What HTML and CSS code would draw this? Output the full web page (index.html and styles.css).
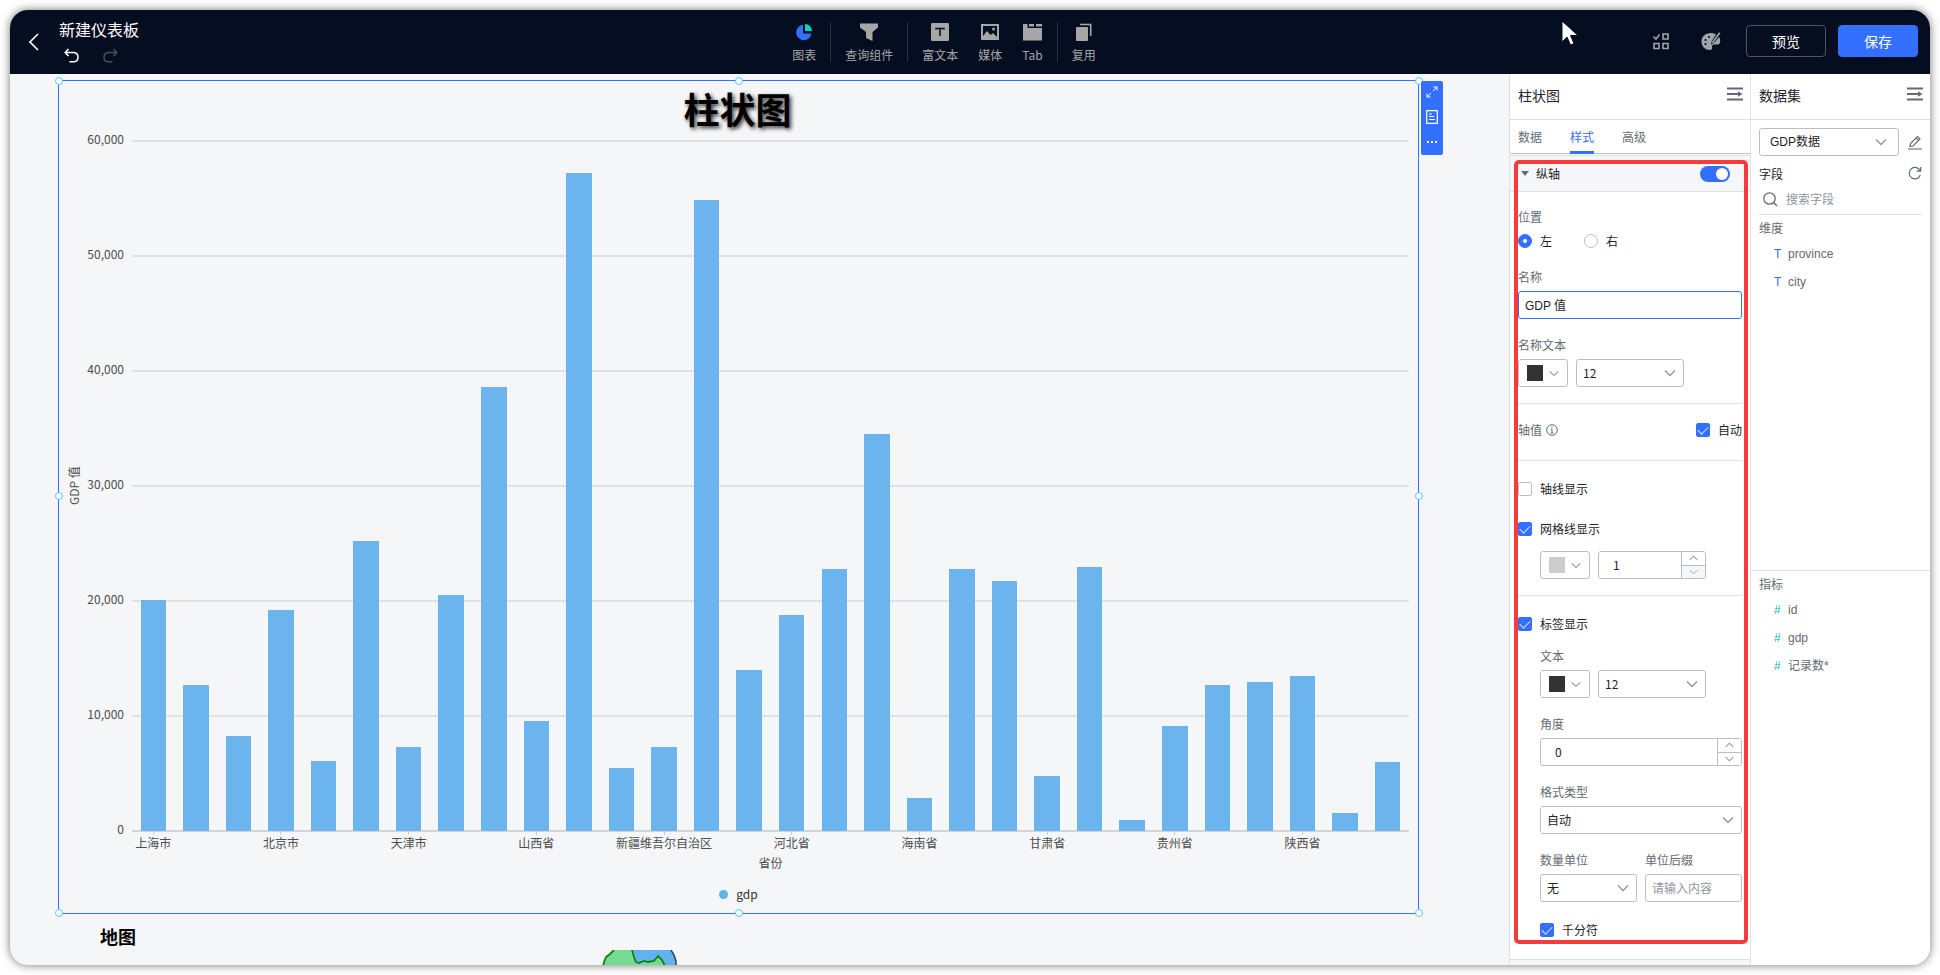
FILE: index.html
```html
<!DOCTYPE html>
<html lang="zh-CN">
<head>
<meta charset="utf-8">
<title>新建仪表板</title>
<link rel="stylesheet" href="styles.css">
</head>
<body>
<svg class="defs" aria-hidden="true">
  <symbol id="chev" viewBox="0 0 12 8"><path d="M1 1.5 6 6.5 11 1.5" fill="none" stroke="currentColor" stroke-width="1.3"/></symbol>
  <symbol id="fold" viewBox="0 0 16 14"><path d="M0 1.5h16M0 12.5h16" stroke="currentColor" stroke-width="2.2"/><path d="M0 7h12" stroke="currentColor" stroke-width="2"/><path d="M11 4.2 15.5 7 11 9.8z" fill="currentColor"/></symbol>
</svg>
<div class="app">
  <header class="topbar">
    <div class="brand">
      <button class="icon-btn back" aria-label="返回"><svg width="10" height="18" viewBox="0 0 10 18"><path d="M9 1 1 9l8 8" fill="none" stroke="#fff" stroke-width="1.6"/></svg></button>
      <div class="brand-text">
        <h1>新建仪表板</h1>
        <div class="history">
          <button class="icon-btn" aria-label="撤销"><svg width="16" height="16" viewBox="0 0 16 16"><path d="M4.5 1 1.2 4.5 4.5 8M1.5 4.5H10a4.7 4.7 0 0 1 0 9.3H5.5" fill="none" stroke="#fff" stroke-width="1.5"/></svg></button>
          <button class="icon-btn" aria-label="重做" disabled><svg width="16" height="16" viewBox="0 0 16 16"><path d="M11.5 1 14.8 4.5 11.5 8M14.5 4.5H6a4.7 4.7 0 0 0 0 9.3h4.5" fill="none" stroke="#4c5059" stroke-width="1.5"/></svg></button>
        </div>
      </div>
    </div>
    <nav class="tools">
      <div class="tool-group">
        <button class="tool"><svg width="18" height="18" viewBox="0 0 18 18"><path d="M8 1.8A7.7 7.7 0 1 0 16.5 10.500H8z" fill="#3370ff"/><path d="M10 1a7 7 0 0 1 7 7h-7z" fill="#00d6b9"/></svg>图表</button>
      </div>
      <div class="tool-group">
        <button class="tool"><svg width="18" height="18" viewBox="0 0 18 18"><path d="M0 .5h18v4L12.500 9v9L6 15V9L0 4.500z" fill="#a6a6a6"/></svg>查询组件</button>
      </div>
      <div class="tool-group">
        <button class="tool"><svg width="18" height="18" viewBox="0 0 18 18"><rect width="18" height="18" rx="1" fill="#a6a6a6"/><path d="M5 6.500V5.500h8v1M9 5.500V13" fill="none" stroke="#050e21" stroke-width="1.600"/></svg>富文本</button>
        <button class="tool"><svg width="18" height="18" viewBox="0 0 18 18"><path d="M0 1h18v16H0zM2 3v10l4-5 3.500 4L12 10l4 4V3z" fill="#a6a6a6" fill-rule="evenodd"/><circle cx="12.500" cy="6" r="1.500" fill="#a6a6a6"/></svg>媒体</button>
        <button class="tool"><svg width="19" height="18" viewBox="0 0 19 18"><path d="M0 1h4.500v4H19v12.500H0z" fill="#a6a6a6"/><path d="M6 1h5v2.500H6zM13 1h6v2.500h-6z" fill="#a6a6a6"/></svg>Tab</button>
      </div>
      <div class="tool-group">
        <button class="tool"><svg width="18" height="18" viewBox="0 0 18 18"><rect x="1" y="4" width="12" height="14" rx="1" fill="#a6a6a6"/><path d="M5 1.500h10.700V13" fill="none" stroke="#a6a6a6" stroke-width="1.600"/></svg>复用</button>
      </div>
    </nav>
    <div class="actions">
      <button class="icon-btn" aria-label="批量选择"><svg width="16" height="17" viewBox="0 0 16 17"><path d="M.5 3.500 3 6l3.500-4.500M10 1h5v5h-5zM1 10.500h5v5H1zM10 10.500h5v5h-5z" fill="none" stroke="#a0a4ab" stroke-width="1.600"/></svg></button>
      <button class="icon-btn palette" aria-label="主题"><svg width="20" height="19" viewBox="0 0 20 19"><path d="M10 1C4.500 1 .5 4.500.5 9.500S4.500 18 9 18c2 0 2.500-1.500 2-3s.5-2.500 2.500-2.500h3c2 0 2.700-1.700 2.700-3.500 0-1.300-.5-3-1.200-4L13 11l-3 1.500.8-3.500L15 2.500C13.500 1.500 12 1 10 1z" fill="#a0a4ab"/><path d="M18.800.8 13 8.500l-1.500 2.500" fill="none" stroke="#a0a4ab" stroke-width="1.800"/><circle cx="4.500" cy="8" r="1.100" fill="#050e21"/><circle cx="8" cy="5" r="1.100" fill="#050e21"/><circle cx="4.500" cy="12" r="1.100" fill="#050e21"/></svg></button>
      <div class="buttons"><button class="btn">预览</button><button class="btn primary">保存</button></div>
    </div>
    <svg class="cursor" width="18" height="27" viewBox="0 0 18 27"><path d="M1 1v21l5-5 3.500 8 3.500-1.500L9.500 15.500H17z" fill="#fff" stroke="#050e21"/></svg>
  </header>

  <main class="workspace">
    <section class="canvas">
      <article class="widget">
        <i class="handle tl"></i><i class="handle tc"></i><i class="handle tr"></i><i class="handle ml"></i><i class="handle mr"></i><i class="handle bl"></i><i class="handle bc"></i><i class="handle br"></i>
        <div class="widget-tools">
          <button class="icon-btn" aria-label="放大"><svg width="12" height="12" viewBox="0 0 12 12"><path d="M7 5l4-4M7.500 1H11v3.500M5 7l-4 4M1 7.500V11h3.500" fill="none" stroke="#fff"/></svg></button>
          <button class="icon-btn" aria-label="数据"><svg width="12" height="14" viewBox="0 0 12 14"><path d="M.7.7h10.600v12.600H.7zM3 4h3M3 6.500h5M3 9.500h6" fill="none" stroke="#fff" stroke-width="1.200"/></svg></button>
          <button class="icon-btn" aria-label="更多"><svg width="12" height="4" viewBox="0 0 12 4"><path d="M1 1h2v2H1zM5 1h2v2H5zM9 1h2v2H9z" fill="#fff"/></svg></button>
        </div>
        <h2 class="chart-title">柱状图</h2>
        <div class="chart">
          <div class="axis-name">GDP 值</div>
          <div class="y-axis"><span>60,000</span><span>50,000</span><span>40,000</span><span>30,000</span><span>20,000</span><span>10,000</span><span>0</span></div>
          <div class="plot">
            <div class="grid-lines"><i></i><i></i><i></i><i></i><i></i><i></i></div>
            <div class="bars">
              <i style="--v:20110"></i><i style="--v:12700"></i><i style="--v:8300"></i><i style="--v:19220"></i><i style="--v:6080"></i><i style="--v:25240"></i>
              <i style="--v:7300"></i><i style="--v:20560"></i><i style="--v:38640"></i><i style="--v:9600"></i><i style="--v:57240"></i><i style="--v:5520"></i>
              <i style="--v:7340"></i><i style="--v:54880"></i><i style="--v:13980"></i><i style="--v:18790"></i><i style="--v:22750"></i><i style="--v:34520"></i>
              <i style="--v:2900"></i><i style="--v:22750"></i><i style="--v:21700"></i><i style="--v:4770"></i><i style="--v:22920"></i><i style="--v:960"></i>
              <i style="--v:9100"></i><i style="--v:12690"></i><i style="--v:12930"></i><i style="--v:13480"></i><i style="--v:1570"></i><i style="--v:6000"></i>
            </div>
          </div>
          <div class="x-axis">
            <span>上海市</span><span>北京市</span><span>天津市</span><span>山西省</span><span>新疆维吾尔自治区</span><span>河北省</span><span>海南省</span><span>甘肃省</span><span>贵州省</span><span>陕西省</span>
          </div>
          <div class="x-name">省份</div>
        </div>
        <div class="legend"><i></i>gdp</div>
      </article>
      <article class="map-widget">
        <h2>地图</h2>
        <svg class="map" width="76" height="40" viewBox="0 0 76 40"><path d="M0 18 2 13 4 7 8 4 12 0H32L35 12 38 13 42 11 46 12 52 10 55 6 59 9 62 14 68 20V40H0z" fill="#76db90"/><path d="M31 0H69L72 5 74 14 76 40H68L62 14 59 9 55 6 52 10 46 12 42 11 38 13 34 11z" fill="#63b2ee"/><path d="M1 16 2 12 4 7 8 4 12 0M30 0 32 7 34 12 37 13 42 11 46 12 52 11 56 6 60 10 63 16" fill="none" stroke="#0a820f" stroke-width="1.800"/><path d="M69 0 72 5 74 11v6" fill="none" stroke="#333b44" stroke-width="1.500"/></svg>
      </article>
    </section>

    <aside class="panel style-panel">
      <div class="panel-head"><h2>柱状图</h2><button class="icon-btn" aria-label="收起"><svg width="16" height="14"><use href="#fold"/></svg></button></div>
      <nav class="tabs"><button>数据</button><button class="active">样式</button><button>高级</button></nav>
      <section class="section">
        <div class="section-head"><svg width="8" height="5" viewBox="0 0 8 5"><path d="M0 0h8L4 5z" fill="#646a73"/></svg><label for="axis-on">纵轴</label><input class="switch" type="checkbox" id="axis-on" checked></div>
        <div class="section-body">
          <div class="field">
            <span class="label">位置</span>
            <div class="radios"><label class="opt"><input type="radio" name="pos" checked>左</label><label class="opt"><input type="radio" name="pos">右</label></div>
          </div>
          <div class="field"><label class="label" for="axis-name">名称</label><input class="text focus" id="axis-name" value="GDP 值"></div>
          <div class="field">
            <label class="label" for="name-size">名称文本</label>
            <div class="row"><button class="box color" aria-label="颜色"><i class="dark"></i><svg width="10" height="7"><use href="#chev"/></svg></button>
            <div class="select size"><select id="name-size"><option>12</option></select><svg width="12" height="8"><use href="#chev"/></svg></div></div>
          </div>
          <hr>
          <div class="range"><span class="label">轴值 <svg width="12" height="12" viewBox="0 0 12 12"><circle cx="6" cy="6" r="5.300" fill="none" stroke="#646a73"/><path d="M6 2.500v1.300M4.800 5.200H6V9M4.500 9h3" fill="none" stroke="#646a73"/></svg></span><label class="opt"><input type="checkbox" checked>自动</label></div>
          <hr class="after-range">
          <label class="opt first"><input type="checkbox">轴线显示</label>
          <label class="opt second"><input type="checkbox" checked>网格线显示</label>
          <div class="row indent grid-style"><button class="box color" aria-label="网格线颜色"><i class="light"></i><svg width="10" height="7"><use href="#chev"/></svg></button>
            <div class="box number size"><input aria-label="网格线宽度" value="1"><div class="steps"><button aria-label="加"><svg width="9" height="6" class="up"><use href="#chev"/></svg></button><button aria-label="减" disabled><svg width="9" height="6"><use href="#chev"/></svg></button></div></div></div>
          <hr>
          <label class="opt third"><input type="checkbox" checked>标签显示</label>
          <div class="indent label-style">
            <div class="field">
              <label class="label" for="label-size">文本</label>
              <div class="row"><button class="box color" aria-label="标签颜色"><i class="dark"></i><svg width="10" height="7"><use href="#chev"/></svg></button>
              <div class="select size"><select id="label-size"><option>12</option></select><svg width="12" height="8"><use href="#chev"/></svg></div></div>
            </div>
            <div class="field"><label class="label" for="angle">角度</label>
              <div class="box number"><input id="angle" value="0"><div class="steps"><button aria-label="加"><svg width="9" height="6" class="up"><use href="#chev"/></svg></button><button aria-label="减"><svg width="9" height="6"><use href="#chev"/></svg></button></div></div></div>
            <div class="field"><label class="label" for="format">格式类型</label><div class="select"><select id="format"><option>自动</option></select><svg width="12" height="8"><use href="#chev"/></svg></div></div>
            <div class="row pair">
              <div class="field"><label class="label" for="unit">数量单位</label><div class="select"><select id="unit"><option>无</option></select><svg width="12" height="8"><use href="#chev"/></svg></div></div>
              <div class="field"><label class="label" for="suffix">单位后缀</label><input class="text" id="suffix" placeholder="请输入内容"></div>
            </div>
            <label class="opt fourth"><input type="checkbox" checked>千分符</label>
          </div>
        </div>
        <div class="highlight"></div>
      </section>
      <div class="next-section"></div>
    </aside>

    <aside class="panel data-panel">
      <div class="panel-head"><h2>数据集</h2><button class="icon-btn" aria-label="收起"><svg width="16" height="14"><use href="#fold"/></svg></button></div>
      <div class="dimensions">
        <div class="dataset"><div class="select"><select aria-label="数据集"><option>GDP数据</option></select><svg width="12" height="8"><use href="#chev"/></svg></div>
          <button class="icon-btn" aria-label="编辑"><svg width="14" height="15" viewBox="0 0 14 15"><path d="M2 11.500 2.500 8.500 9.500 1.500 12 4 5 11zM8 3l2.500 2.500" fill="none" stroke="#646a73" stroke-width="1.200"/><path d="M0 14h14" stroke="#8f959e" stroke-width="1.600"/></svg></button></div>
        <div class="fields-head">字段<button class="icon-btn" aria-label="刷新"><svg width="14" height="14" viewBox="0 0 14 14"><path d="M12.200 5A5.700 5.700 0 1 0 12.300 9M12.700 1v4.200H8.500" fill="none" stroke="#646a73" stroke-width="1.200"/></svg></button></div>
        <label class="search"><svg width="15" height="15" viewBox="0 0 15 15"><circle cx="6.500" cy="6.500" r="5.700" fill="none" stroke="#646a73" stroke-width="1.300"/><path d="M10.500 10.500 14 14" stroke="#646a73" stroke-width="1.400"/></svg><input placeholder="搜索字段" aria-label="搜索字段"></label>
        <h3>维度</h3>
        <ul><li><b>T</b>province</li><li><b>T</b>city</li></ul>
      </div>
      <div class="measures">
        <h3>指标</h3>
        <ul><li><b class="num">#</b>id</li><li><b class="num">#</b>gdp</li><li><b class="num">#</b>记录数*</li></ul>
      </div>
    </aside>
  </main>
</div>
</body>
</html>
```
FILE: styles.css
```css
* { box-sizing: border-box; }
body {
  margin: 0;
  padding: 10px;
  height: 100vh;
  overflow: hidden;
  background: #fff;
  color: #1f2329;
  font: 12px/20px "Noto Sans CJK SC", sans-serif;
}
h1, h2, h3, ul { margin: 0; padding: 0; font-weight: 400; list-style: none; }
button, input, select { font: inherit; color: inherit; margin: 0; padding: 0; }
svg { display: block; flex: none; }
.defs { position: absolute; width: 0; height: 0; }
.app {
  height: 100%;
  display: flex;
  flex-direction: column;
  border-radius: 18px;
  overflow: hidden;
  background: #f5f6f8;
  box-shadow: 0 0 10px rgba(0, 0, 0, .55);
}
.icon-btn { display: flex; border: 0; background: none; color: #646a73; }

/* Top bar */
.topbar {
  position: relative;
  flex: none;
  height: 64px;
  display: grid;
  grid-template-columns: 1fr auto 1fr;
  align-items: center;
  background: #050e21;
}
.brand { display: flex; align-items: center; gap: 20px; padding-left: 19px; }
.brand-text { display: flex; flex-direction: column; gap: 9px; padding-bottom: 2px; }
.brand h1 { font-size: 16px; line-height: 20px; color: #fff; }
.history { display: flex; gap: 22px; padding-left: 5px; }
.tools { display: flex; padding-right: 52px; }
.tool-group { display: flex; gap: 20px; padding: 0 14px; height: 40px; }
.tool-group + .tool-group { border-left: 1px solid #2b3140; }
.tool {
  display: flex;
  flex-direction: column;
  align-items: center;
  gap: 4px;
  border: 0;
  padding-top: 1px;
  background: none;
  color: #a6a6a6;
  line-height: 20px;
}
.actions { display: flex; align-items: center; justify-content: flex-end; gap: 32px; padding: 0 12px 2px 0; }
.buttons { display: flex; gap: 12px; margin-left: -7px; }
.btn {
  width: 80px;
  height: 32px;
  border: 1px solid #50555f;
  border-radius: 4px;
  padding-bottom: 1px;
  background: none;
  color: #fff;
  font-size: 14px;
}
.btn.primary { background: #3370ff; border-color: #3370ff; }
.cursor { position: absolute; left: 1551px; top: 10px; }

/* Canvas */
.workspace { flex: 1; min-height: 0; display: flex; }
.canvas { flex: 1; min-width: 0; padding: 6px 90px 0 48px; overflow: hidden; }
.widget { position: relative; border: 1px solid #3370ff; padding: 5px 9px 9px 7px; }
.handle {
  position: absolute;
  width: 8px;
  height: 8px;
  border: 1px solid #59c7f9;
  border-radius: 50%;
  background: #fff;
}
.tl, .tc, .tr { top: -4px; }
.bl, .bc, .br { bottom: -4px; }
.tl, .ml, .bl { left: -4px; }
.tr, .mr, .br { right: -5px; }
.tc, .bc { left: calc(50% - 4px); }
.ml, .mr { top: calc(50% - 5px); }
.widget-tools {
  position: absolute;
  left: calc(100% + 3px);
  top: 0;
  width: 22px;
  height: 74px;
  display: flex;
  flex-direction: column;
  border-radius: 2px;
  background: #3370ff;
}
.widget-tools .icon-btn { flex: 1; align-items: center; justify-content: center; padding-bottom: 2px; }
.chart-title {
  text-align: center;
  font-size: 36px;
  line-height: 44px;
  font-weight: 700;
  color: #000;
  text-shadow: 2px 2px 4px rgba(0, 0, 0, .8);
}
.chart {
  display: grid;
  grid-template-columns: 16px 42px 1fr;
  padding-top: 11px;
  color: #4d4d4d;
}
.axis-name {
  writing-mode: vertical-rl;
  text-orientation: sideways;
  transform: rotate(180deg);
  text-align: center;
  line-height: 16px;
}
.y-axis {
  display: flex;
  flex-direction: column;
  justify-content: space-between;
  margin: -12px 0 -8px;
  text-align: right;
}
.plot { display: grid; height: 690px; margin-left: 8px; }
.grid-lines, .bars { grid-area: 1 / 1; display: flex; }
.grid-lines { flex-direction: column; border-bottom: 2px solid #d4d5d7; margin: -1px 0; }
.grid-lines i { flex: 1; border-top: 2px solid #e0e1e3; }
.bars { align-items: flex-end; justify-content: space-around; }
.bars i { flex: none; width: 2%; height: calc(var(--v) / 600 * 1%); background: #6bb4ee; }
.x-axis {
  grid-column: 3;
  margin-left: 8px;
  display: grid;
  grid-template-columns: repeat(10, 1fr);
  line-height: 16px;
}
.x-axis span { width: 33.333%; display: flex; flex-direction: column; align-items: center; white-space: nowrap; }
.x-axis span::before { content: ""; width: 1px; height: 4px; background: #ccc; }
.x-name { grid-column: 3; margin: 3px 0 0 8px; text-align: center; line-height: 18px; }
.legend { display: flex; align-items: center; justify-content: center; gap: 8px; margin-top: 12px; padding-left: 2px; color: #333; }
.legend i { width: 9px; height: 9px; border-radius: 50%; background: #63b2ee; }
.map-widget { padding: 10px 0 0 42px; }
.map-widget h2 { font-size: 18px; line-height: 24px; font-weight: 700; color: #000; }
.map { margin: 2px 0 0 502px; }

/* Side panels */
.panel { flex: none; display: flex; flex-direction: column; background: #fff; border-left: 1px solid #dee0e3; overflow: hidden; }
.style-panel { width: 241px; }
.data-panel { width: 180px; }
.panel-head {
  flex: none;
  height: 46px;
  display: flex;
  align-items: center;
  justify-content: space-between;
  padding: 0 7px 4px 8px;
  border-bottom: 1px solid #dee0e3;
}
.panel-head h2 { font-size: 14px; }
.panel-head svg { margin-bottom: 2px; }
.tabs { flex: none; height: 34px; display: flex; gap: 28px; padding-left: 8px; border-bottom: 1px solid #bbbfc4; }
.tabs button { border: 0; border-bottom: 3px solid transparent; padding-top: 2px; background: none; color: #646a73; height: 34px; }
.tabs .active { color: #3370ff; border-color: #3370ff; }
.section { position: relative; flex: none; margin-top: 1px; border-top: 1px solid #dee0e3; border-bottom: 1px solid #dee0e3; }
.section-head {
  display: flex;
  align-items: center;
  gap: 7px;
  height: 36px;
  padding: 0 20px 0 11px;
  background: #f5f6f8;
  border-bottom: 1px solid #dee0e3;
}
.section-head label { flex: 1; }
.switch {
  appearance: none;
  display: flex;
  justify-content: flex-end;
  width: 30px;
  height: 16px;
  padding: 2px;
  border-radius: 8px;
  background: #3370ff;
}
.switch::before { content: ""; width: 12px; height: 12px; border-radius: 50%; background: #fff; }
.highlight { position: absolute; inset: 4px 2px 15px 4px; border: 4px solid #f53b3b; border-radius: 5px; pointer-events: none; }
.next-section { flex: 1; background: #f5f6f8; }
.section-body { padding: 15px 8px 19px; }
.field { display: flex; flex-direction: column; gap: 4px; margin-bottom: 16px; }
.label { display: flex; align-items: center; gap: 4px; color: #646a73; }
.radios { display: flex; gap: 32px; }
.opt { display: flex; align-items: center; gap: 8px; height: 20px; }
.opt input {
  appearance: none;
  display: flex;
  align-items: center;
  justify-content: center;
  width: 14px;
  height: 14px;
  border: 1px solid #bbbfc4;
  border-radius: 2px;
  background: #fff;
}
.opt input[type="radio"] { border-radius: 50%; }
.opt input:checked { background: #3370ff; border-color: #3370ff; }
.opt input[type="radio"]:checked::before { content: ""; width: 4px; height: 4px; border-radius: 50%; background: #fff; }
.opt input[type="checkbox"]:checked::before {
  content: "";
  width: 9px;
  height: 5px;
  border: solid #d6e2ff;
  border-width: 0 0 1px 1px;
  transform: rotate(-45deg);
  margin-bottom: 3px;
}
.text, .box, .select select {
  width: 100%;
  height: 28px;
  border: 1px solid #bbbfc4;
  border-radius: 3px;
  background: #fff;
}
.text { padding: 0 6px 2px; outline: 0; }
.text.focus { border-color: #3370ff; font-family: "Liberation Sans", "Noto Sans CJK SC", sans-serif; }
.text::placeholder, .search input::placeholder { color: #8f959e; opacity: 1; }
.select { position: relative; color: #1f2329; }
.select select { appearance: none; padding: 0 6px 1px; }
.select svg { position: absolute; right: 8px; top: 10px; color: #8f959e; pointer-events: none; }
.row { display: flex; gap: 8px; }
.row .color { width: 50px; flex: none; display: flex; align-items: center; justify-content: space-between; padding: 0 8px; color: #8f959e; }
.color i { width: 16px; height: 16px; }
.dark { background: #333; }
.light { background: #ccc; }
.size { flex: 0 0 108px; }
.number { display: flex; overflow: hidden; }
.number input { flex: 1; min-width: 0; border: 0; outline: 0; padding-left: 14px; background: none; }
.steps { width: 24px; display: flex; flex-direction: column; border-left: 1px solid #bbbfc4; }
.steps button { flex: 1; display: flex; align-items: center; justify-content: center; border: 0; background: #fff; color: #646a73; }
.steps button + button { border-top: 1px solid #bbbfc4; }
.steps button:disabled { background: #f5f6fa; color: #a0a4ab; }
.up { transform: rotate(180deg); }
hr { height: 1px; border: 0; margin: 16px 0; background: #dee0e3; }
.range { display: flex; justify-content: space-between; align-items: center; }
.after-range { margin: 20px 0 18px; }
.second { margin-top: 20px; }
.indent { margin-left: 22px; }
.grid-style { margin-top: 12px; }
.third { margin-top: 18px; }
.label-style { margin-top: 12px; }
.pair .field { flex: 1; min-width: 0; margin-bottom: 0; }
.fourth { margin-top: 18px; }

/* Data panel */
.dimensions { flex: none; height: 450px; padding: 8px 8px 0; }
.dataset { display: flex; align-items: center; gap: 9px; }
.dataset .select { flex: 1; font-family: "Liberation Sans", "Noto Sans CJK SC", sans-serif; }
.dataset .select select { padding: 0 10px 1px; }
.dataset .select svg { right: 12px; }
.fields-head { display: flex; justify-content: space-between; align-items: center; margin-top: 8px; }
.fields-head .icon-btn { margin-bottom: 2px; }
.search { display: flex; align-items: center; gap: 8px; height: 31px; padding-left: 4px; border-bottom: 1px solid #dee0e3; }
.search input { width: 100%; min-width: 0; border: 0; outline: 0; background: none; }
.panel h3 { font-size: 12px; line-height: 20px; color: #646a73; }
.dimensions h3 { margin-top: 3px; }
.panel li { display: flex; height: 28px; align-items: center; padding-left: 15px; gap: 7px; color: #646a73; font-family: "Liberation Sans", "Noto Sans CJK SC", sans-serif; }
.panel ul { padding-top: 2px; }
.panel li b { width: 7px; font-weight: 400; color: #3370ff; }
.panel li .num { color: #14b8a0; }
.measures { flex: 1; padding: 3px 8px 0; border-top: 1px solid #dee0e3; }
```
